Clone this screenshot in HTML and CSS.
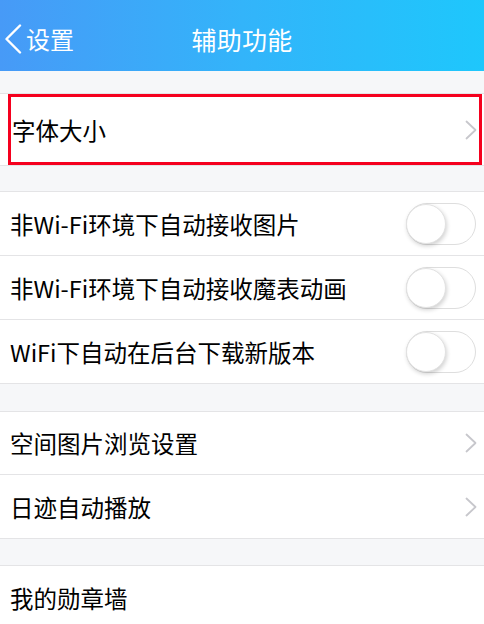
FILE: index.html
```html
<!DOCTYPE html>
<html lang="zh-CN">
<head>
<meta charset="utf-8">
<title>辅助功能</title>
<link rel="stylesheet" href="styles.css">
</head>
<body>
<header class="nav">
  <div class="nav-back">
    <svg class="back-icon" width="18" height="30" viewBox="0 0 18 30"><polyline points="16,1.5 2.5,15 16,28.5" fill="none" stroke="#fff" stroke-width="2.4" stroke-linecap="round" stroke-linejoin="round"/></svg>
    <span class="back-text">设置</span>
  </div>
  <div class="nav-title">辅助功能</div>
  <div class="nav-right"></div>
</header>

<section class="group group-first">
  <div class="row row-tall">
    <div class="highlight">
      <span class="label label-hl">字体大小</span>
      <svg class="chev" width="12" height="20" viewBox="0 0 12 20"><polyline points="1.5,1.5 10.5,10 1.5,18.5" fill="none" stroke="#c7c7cc" stroke-width="1.8" stroke-linecap="round" stroke-linejoin="round"/></svg>
    </div>
  </div>
</section>

<section class="group group-second">
  <div class="row">
    <span class="label">非Wi-Fi环境下自动接收图片</span>
    <span class="toggle"><span class="knob"></span></span>
  </div>
  <div class="row">
    <span class="label">非Wi-Fi环境下自动接收魔表动画</span>
    <span class="toggle"><span class="knob"></span></span>
  </div>
  <div class="row">
    <span class="label">WiFi下自动在后台下载新版本</span>
    <span class="toggle"><span class="knob"></span></span>
  </div>
</section>

<section class="group group-third">
  <div class="row">
    <span class="label">空间图片浏览设置</span>
    <svg class="chev" width="12" height="20" viewBox="0 0 12 20"><polyline points="1.5,1.5 10.5,10 1.5,18.5" fill="none" stroke="#c7c7cc" stroke-width="1.8" stroke-linecap="round" stroke-linejoin="round"/></svg>
  </div>
  <div class="row">
    <span class="label">日迹自动播放</span>
    <svg class="chev" width="12" height="20" viewBox="0 0 12 20"><polyline points="1.5,1.5 10.5,10 1.5,18.5" fill="none" stroke="#c7c7cc" stroke-width="1.8" stroke-linecap="round" stroke-linejoin="round"/></svg>
  </div>
</section>

<section class="group group-fourth">
  <div class="row">
    <span class="label">我的勋章墙</span>
  </div>
</section>
</body>
</html>
```

FILE: styles.css
```css
* { box-sizing: border-box; }
html, body { margin: 0; padding: 0; }
body {
  background: #f6f7f9;
  font-family: "Noto Sans CJK SC", "Noto Sans", sans-serif;
  width: 484px;
  height: 624px;
  overflow: hidden;
}

.nav {
  height: 71px;
  padding-top: 7px;
  background: linear-gradient(to right, #479af7 0%, #33b4fa 50%, #1ec7fc 100%);
  display: grid;
  grid-template-columns: 1fr auto 1fr;
  align-items: center;
  color: #fff;
}
.nav-back {
  display: flex;
  align-items: center;
  padding-left: 4px;
  gap: 4px;
}
.back-icon { display: block; }
.back-text { font-size: 24px; line-height: 30px; }
.nav-title { font-size: 25px; line-height: 30px; letter-spacing: 0.2px; }

.group {
  background: #fff;
  border-top: 1px solid #e4e4e6;
  border-bottom: 1px solid #e4e4e6;
}
.group-first { margin-top: 22px; }
.group-second { margin-top: 25px; }
.group-third { margin-top: 27px; }
.group-fourth { margin-top: 26px; }

.row {
  height: 64px;
  display: flex;
  align-items: center;
  justify-content: space-between;
  padding: 0 8px 0 10px;
  border-bottom: 1px solid #e4e4e6;
}
.row:last-child { border-bottom: none; height: 63px; }
.group-third .row:first-child { height: 63px; }

.group-first .row-tall {
  height: 71px;
  padding: 0 2px 0 8px;
}
.highlight {
  flex: 1;
  height: 71px;
  border: 3px solid #f5001e;
  display: flex;
  align-items: center;
  justify-content: space-between;
  padding: 0 3px 0 1px;
}

.label {
  font-size: 23.5px;
  color: #000;
  line-height: 32px;
}
.chev { display: block; margin-right: -1px; }

.toggle {
  width: 70px;
  height: 42px;
  border: 1.5px solid #dedede;
  border-radius: 21px;
  background: #fff;
  display: flex;
  align-items: center;
}
.knob {
  width: 40px;
  height: 40px;
  margin-left: -1px;
  border-radius: 50%;
  background: #fff;
  border: 1px solid #e2e2e2;
  box-shadow: 1px 2px 4px rgba(0, 0, 0, 0.18);
}
```
